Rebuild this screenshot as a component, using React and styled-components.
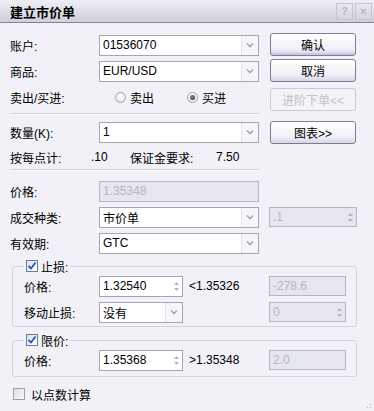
import React from 'react';
import styled, { createGlobalStyle, css } from 'styled-components';

const Global = createGlobalStyle`
  html, body {
    margin: 0;
    background: #f1f1f7;
  }
  body {
    font-family: "Liberation Sans", "Noto Sans CJK SC", sans-serif;
    font-size: 12px;
    color: #000;
  }
`;

const Window = styled.div`
  width: 374px;
  height: 411px;
  position: relative;
  overflow: hidden;
  background: #f1f1f7;
`;

const TitleBar = styled.div`
  height: 22px;
  border-bottom: 1px solid #84848e;
  background: linear-gradient(#eeeef4, #d0d0dc);
  display: flex;
  align-items: center;
  padding: 0 2px 0 10px;
`;

const Title = styled.div`
  flex: 1;
  font-weight: bold;
  font-size: 13px;
`;

const TitleButton = styled.div`
  width: 17px;
  height: 17px;
  box-sizing: border-box;
  border: 1px solid #c6c6ce;
  margin-left: 2px;
  display: flex;
  align-items: center;
  justify-content: center;
  color: #b6b6be;
  font-size: 11px;
  font-weight: bold;
`;

const Body = styled.div`
  padding: 0 17px 0 10px;
`;

const Top = styled.div`
  display: flex;
`;

const LeftCol = styled.div`
  width: 249px;
  padding-top: 9px;
`;

const RightCol = styled.div`
  margin-left: 11px;
  padding-top: 10px;
  display: flex;
  flex-direction: column;
`;

const Button = styled.div`
  width: 86px;
  height: 23px;
  box-sizing: border-box;
  margin-top: ${(p) => p.$mt || 0}px;
  border: 1px solid #7c7c92;
  border-radius: 3px;
  background: linear-gradient(#ffffff, #f0f0f6 70%, #d6d6e6);
  display: flex;
  align-items: center;
  justify-content: center;
  ${(p) =>
    p.$primary &&
    css`
      box-shadow: inset 0 -2px 0 #c8c8ec;
    `}
  ${(p) =>
    p.$disabled &&
    css`
      border-color: #cacad4;
      color: #c0c0ca;
      background: #f4f4f8;
    `}
`;

const Row = styled.div`
  display: flex;
  align-items: center;
  height: ${(p) => p.$h || 26}px;
  margin-top: ${(p) => p.$mt || 0}px;
`;

const Label = styled.div`
  width: ${(p) => p.$w || 89}px;
  flex-shrink: 0;
  white-space: nowrap;
`;

const Separator = styled.div`
  height: 1px;
  background: #d2d2dc;
  border-bottom: 1px solid #ffffff;
  margin-top: ${(p) => p.$mt || 0}px;
`;

const Field = styled.div`
  width: ${(p) => p.$w || 160}px;
  height: ${(p) => p.$h || 21}px;
  box-sizing: border-box;
  border: 1px solid #a6a6b0;
  background: #fff;
  display: flex;
  align-items: center;
  flex-shrink: 0;
  ${(p) =>
    p.$disabled &&
    css`
      background: #e6e6ee;
      border-color: #b6b6c0;
      color: #b6b6c0;
    `}
`;

const Value = styled.div`
  flex: 1;
  padding-left: 3px;
  white-space: nowrap;
  overflow: hidden;
`;

const DropButton = styled.div`
  width: 16px;
  align-self: stretch;
  border-left: 1px solid #e2e2ea;
  background: #f6f6fa;
  display: flex;
  align-items: center;
  justify-content: center;
`;

const SpinButtons = styled.div`
  width: 12px;
  align-self: stretch;
  display: flex;
  flex-direction: column;
  align-items: center;
  justify-content: center;
  gap: 3px;
`;

const Gap = styled.div`
  width: ${(p) => p.$w}px;
  flex-shrink: 0;
`;

const Info = styled.div`
  width: ${(p) => p.$w}px;
  flex-shrink: 0;
  white-space: nowrap;
`;

const RadioOption = styled.div`
  width: 78px;
  display: flex;
  align-items: center;
  gap: 4px;
`;

const RadioCircle = styled.div`
  width: 11px;
  height: 11px;
  box-sizing: border-box;
  border-radius: 50%;
  border: 1px solid #a4a4ae;
  background: radial-gradient(circle at 50% 35%, #ffffff, #dedee6);
  display: flex;
  align-items: center;
  justify-content: center;
  &::after {
    content: '';
    display: ${(p) => (p.$checked ? 'block' : 'none')};
    width: 5px;
    height: 5px;
    border-radius: 50%;
    background: radial-gradient(circle at 40% 35%, #8a8a96, #2a2a32);
  }
`;

const Group = styled.fieldset`
  margin: ${(p) => p.$mt || 0}px 0 0 2px;
  width: 345px;
  box-sizing: border-box;
  border: 1px solid #d4d4de;
  border-radius: 3px;
  padding: 0 0 ${(p) => p.$pb || 0}px 11px;
`;

const Legend = styled.legend`
  padding: 0 2px;
  height: 14px;
  display: flex;
  align-items: center;
  gap: 3px;
`;

const Box = styled.div`
  width: 12px;
  height: 12px;
  box-sizing: border-box;
  border: 1px solid ${(p) => (p.$checked ? '#6a7c9c' : '#a0a0ac')};
  background: ${(p) =>
    p.$checked
      ? 'linear-gradient(135deg, #d8e0ee, #ffffff)'
      : 'linear-gradient(135deg, #e0e0e8, #f6f6fa)'};
  display: flex;
  align-items: center;
  justify-content: center;
  flex-shrink: 0;
`;

const CheckRow = styled.div`
  display: flex;
  align-items: center;
  gap: 6px;
  height: 14px;
  margin: ${(p) => p.$mt || 0}px 0 0 3px;
`;

const Grip = styled.div`
  position: absolute;
  right: 1px;
  bottom: 1px;
  width: 10px;
  height: 10px;
  background-image: radial-gradient(circle, #b8b8c4 0.8px, transparent 1px);
  background-size: 3px 3px;
  clip-path: polygon(100% 0, 100% 100%, 0 100%);
`;

function Chevron() {
  return (
    <svg width="8" height="6" viewBox="0 0 8 6">
      <path d="M1 1.5 L4 4.5 L7 1.5" fill="none" stroke="#a4a4b6" strokeWidth="1.6" />
    </svg>
  );
}

function Arrows() {
  return (
    <>
      <svg width="5" height="3" viewBox="0 0 5 3">
        <path d="M0 3 L2.5 0 L5 3 Z" fill="#b4b4c0" />
      </svg>
      <svg width="5" height="3" viewBox="0 0 5 3">
        <path d="M0 0 L2.5 3 L5 0 Z" fill="#b4b4c0" />
      </svg>
    </>
  );
}

function Combo({ value, w }) {
  return (
    <Field $w={w}>
      <Value>{value}</Value>
      <DropButton>
        <Chevron />
      </DropButton>
    </Field>
  );
}

function Spin({ value, w, h, disabled }) {
  return (
    <Field $w={w} $h={h} $disabled={disabled}>
      <Value>{value}</Value>
      <SpinButtons>
        <Arrows />
      </SpinButtons>
    </Field>
  );
}

function CheckBox({ checked }) {
  return (
    <Box $checked={checked}>
      {checked && (
        <svg width="10" height="10" viewBox="0 0 10 10">
          <path d="M1.5 5 L4 7.5 L8.5 1.5" fill="none" stroke="#2a56a8" strokeWidth="1.8" />
        </svg>
      )}
    </Box>
  );
}

export default function App() {
  return (
    <Window>
      <Global />
      <TitleBar>
        <Title>建立市价单</Title>
        <TitleButton>?</TitleButton>
        <TitleButton>×</TitleButton>
      </TitleBar>
      <Body>
        <Top>
          <LeftCol>
            <Row>
              <Label>账户:</Label>
              <Combo value="01536070" />
            </Row>
            <Row>
              <Label>商品:</Label>
              <Combo value="EUR/USD" />
            </Row>
            <Row>
              <Label>卖出/买进:</Label>
              <Gap $w={16} />
              <RadioOption>
                <RadioCircle />
                卖出
              </RadioOption>
              <RadioOption>
                <RadioCircle $checked />
                买进
              </RadioOption>
            </Row>
            <Separator $mt={3} />
            <Row $mt={4}>
              <Label>数量(K):</Label>
              <Combo value="1" />
            </Row>
            <Row $h={24}>
              <Info $w={81}>按每点计:</Info>
              <Info $w={39}>.10</Info>
              <Info $w={86}>保证金要求:</Info>
              <Info $w={40}>7.50</Info>
            </Row>
            <Separator />
          </LeftCol>
          <RightCol>
            <Button $primary>确认</Button>
            <Button $mt={3}>取消</Button>
            <Button $mt={6} $disabled>进阶下单&lt;&lt;</Button>
            <Button $mt={10}>图表&gt;&gt;</Button>
          </RightCol>
        </Top>

        <Row $mt={7}>
          <Label>价格:</Label>
          <Field $disabled>
            <Value>1.35348</Value>
          </Field>
        </Row>
        <Row>
          <Label>成交种类:</Label>
          <Combo value="市价单" />
          <Gap $w={10} />
          <Spin value=".1" w={88} h={20} disabled />
        </Row>
        <Row>
          <Label>有效期:</Label>
          <Combo value="GTC" />
        </Row>

        <Group $mt={3} $pb={1}>
          <Legend>
            <CheckBox checked />
            止损:
          </Legend>
          <Row>
            <Label $w={75}>价格:</Label>
            <Spin value="1.32540" w={84} />
            <Gap $w={6} />
            <Info $w={80}>&lt;1.35326</Info>
            <Field $w={77} $h={20} $disabled>
              <Value>-278.6</Value>
            </Field>
          </Row>
          <Row>
            <Label $w={75}>移动止损:</Label>
            <Combo value="没有" w={84} />
            <Gap $w={86} />
            <Spin value="0" w={77} h={20} disabled />
          </Row>
        </Group>

        <Group $mt={6} $pb={3}>
          <Legend>
            <CheckBox checked />
            限价:
          </Legend>
          <Row>
            <Label $w={75}>价格:</Label>
            <Spin value="1.35368" w={84} />
            <Gap $w={6} />
            <Info $w={80}>&gt;1.35348</Info>
            <Field $w={77} $h={20} $disabled>
              <Value>2.0</Value>
            </Field>
          </Row>
        </Group>

        <CheckRow $mt={10}>
          <CheckBox />
          以点数计算
        </CheckRow>
      </Body>
      <Grip />
    </Window>
  );
}
